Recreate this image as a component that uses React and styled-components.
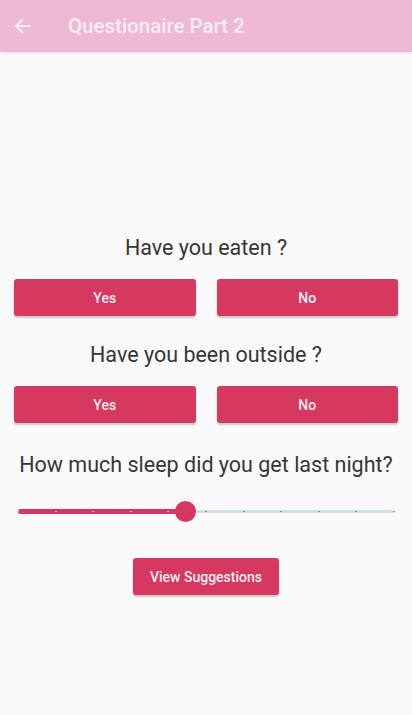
import React from 'react';
import styled, { createGlobalStyle } from 'styled-components';

const GlobalStyle = createGlobalStyle`
  html, body {
    margin: 0;
    padding: 0;
    background: #fafafa;
    font-family: Roboto, "Liberation Sans", sans-serif;
  }
`;

const Page = styled.div`
  width: 412px;
  min-height: 715px;
  background: #fafafa;
  display: flex;
  flex-direction: column;
`;

const AppBar = styled.header`
  height: 52px;
  background: #eeb9d5;
  display: flex;
  align-items: center;
  padding: 0 14px;
  box-shadow: 0 1px 3px rgba(0, 0, 0, 0.12);
  box-sizing: border-box;
`;

const BackButton = styled.button`
  border: none;
  background: none;
  padding: 0;
  width: 16px;
  height: 16px;
  display: flex;
  color: #fcecf4;
`;

const Title = styled.h1`
  margin: 0 0 0 38px;
  font-size: 20.5px;
  font-weight: 500;
  color: #fcecf4;
`;

const Content = styled.main`
  display: flex;
  flex-direction: column;
  align-items: stretch;
  padding: 182px 14px 0 14px;
`;

const Question = styled.p`
  margin: ${p => p.top || 0}px 0 0 0;
  font-size: 21.5px;
  line-height: 28px;
  text-align: center;
  color: #363636;
`;

const Row = styled.div`
  display: flex;
  gap: 21px;
  margin-top: 17px;
`;

const ActionButton = styled.button`
  flex: ${p => (p.wide ? 1 : 'none')};
  height: 37px;
  padding: 0 17px;
  border: none;
  border-radius: 3px;
  background: #d7385f;
  color: #fdeef2;
  font-family: Roboto, "Liberation Sans", sans-serif;
  font-size: 14px;
  font-weight: 500;
  box-shadow: 0 2px 2px rgba(0, 0, 0, 0.2);
`;

const SliderWrap = styled.div`
  position: relative;
  height: 22px;
  margin: 22px 4px 0 4px;
`;

const Track = styled.div`
  position: absolute;
  left: 0;
  right: 0;
  top: 9px;
  height: 3px;
  border-radius: 2px;
  background: #cfe0f3;
`;

const ActiveTrack = styled.div`
  position: absolute;
  left: 0;
  top: 8px;
  height: 5px;
  border-radius: 3px;
  background: #d7385f;
`;

const Tick = styled.span`
  position: absolute;
  top: 10px;
  width: 2px;
  height: 1px;
  margin-left: -1px;
  background: ${p => (p.active ? '#f3b9c8' : '#7f8fb0')};
`;

const Thumb = styled.span`
  position: absolute;
  top: 0;
  width: 21px;
  height: 21px;
  margin-left: -10px;
  border-radius: 50%;
  background: #d7385f;
`;

const Center = styled.div`
  display: flex;
  justify-content: center;
  margin-top: 35px;
`;

const ArrowIcon = () => (
  <svg width="16" height="16" viewBox="0 0 16 16" fill="none" stroke="currentColor" strokeWidth="2" strokeLinecap="square">
    <path d="M15 8H2" />
    <path d="M8 2L2 8l6 6" />
  </svg>
);

const Slider = ({ value, steps }) => {
  const pct = (value / steps) * 100;
  const ticks = Array.from({ length: steps + 1 }, (_, i) => i);
  return (
    <SliderWrap>
      <Track />
      <ActiveTrack style={{ width: `${pct}%` }} />
      {ticks.map(i => (
        <Tick key={i} active={i / steps * 100 < pct} style={{ left: `${(i / steps) * 100}%` }} />
      ))}
      <Thumb style={{ left: `${pct}%` }} />
    </SliderWrap>
  );
};

const YesNo = () => (
  <Row>
    <ActionButton wide>Yes</ActionButton>
    <ActionButton wide>No</ActionButton>
  </Row>
);

export default function App() {
  return (
    <Page>
      <GlobalStyle />
      <AppBar>
        <BackButton><ArrowIcon /></BackButton>
        <Title>Questionaire Part 2</Title>
      </AppBar>
      <Content>
        <Question>Have you eaten ?</Question>
        <YesNo />
        <Question top={25}>Have you been outside ?</Question>
        <YesNo />
        <Question top={28}>How much sleep did you get last night?</Question>
        <Slider value={4.45} steps={10} />
        <Center>
          <ActionButton>View Suggestions</ActionButton>
        </Center>
      </Content>
    </Page>
  );
}
